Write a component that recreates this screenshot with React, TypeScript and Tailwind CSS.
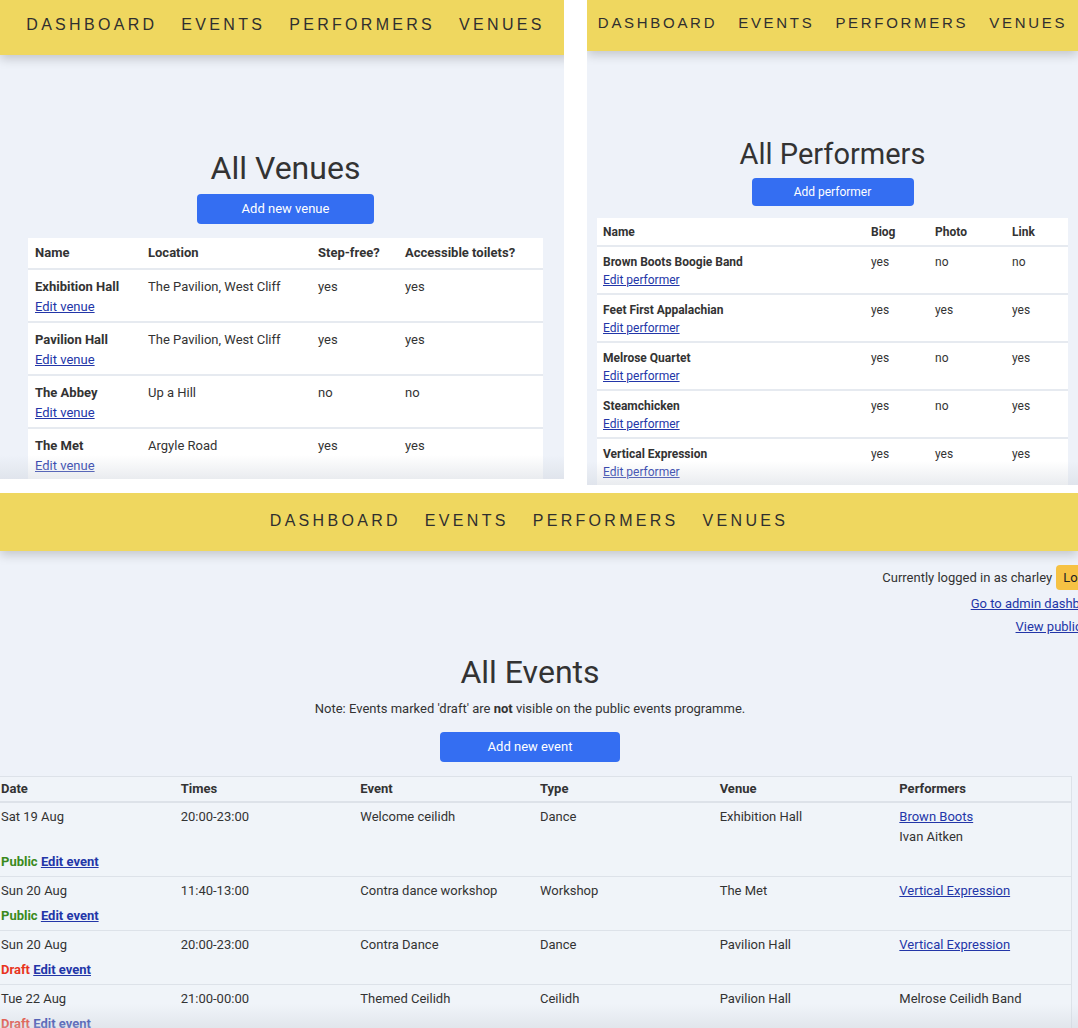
import React from "react";

const venues = [
  { name: "Exhibition Hall", location: "The Pavilion, West Cliff", stepFree: "yes", toilets: "yes" },
  { name: "Pavilion Hall", location: "The Pavilion, West Cliff", stepFree: "yes", toilets: "yes" },
  { name: "The Abbey", location: "Up a Hill", stepFree: "no", toilets: "no" },
  { name: "The Met", location: "Argyle Road", stepFree: "yes", toilets: "yes" },
];

const performers = [
  { name: "Brown Boots Boogie Band", biog: "yes", photo: "no", link: "no" },
  { name: "Feet First Appalachian", biog: "yes", photo: "yes", link: "yes" },
  { name: "Melrose Quartet", biog: "yes", photo: "no", link: "yes" },
  { name: "Steamchicken", biog: "yes", photo: "no", link: "yes" },
  { name: "Vertical Expression", biog: "yes", photo: "yes", link: "yes" },
];

type Perf = { name: string; link?: boolean };

const events: {
  date: string;
  times: string;
  name: string;
  type: string;
  venue: string;
  performers: Perf[];
  status: "Public" | "Draft";
}[] = [
  {
    date: "Sat 19 Aug",
    times: "20:00-23:00",
    name: "Welcome ceilidh",
    type: "Dance",
    venue: "Exhibition Hall",
    performers: [{ name: "Brown Boots", link: true }, { name: "Ivan Aitken" }],
    status: "Public",
  },
  {
    date: "Sun 20 Aug",
    times: "11:40-13:00",
    name: "Contra dance workshop",
    type: "Workshop",
    venue: "The Met",
    performers: [{ name: "Vertical Expression", link: true }],
    status: "Public",
  },
  {
    date: "Sun 20 Aug",
    times: "20:00-23:00",
    name: "Contra Dance",
    type: "Dance",
    venue: "Pavilion Hall",
    performers: [{ name: "Vertical Expression", link: true }],
    status: "Draft",
  },
  {
    date: "Tue 22 Aug",
    times: "21:00-00:00",
    name: "Themed Ceilidh",
    type: "Ceilidh",
    venue: "Pavilion Hall",
    performers: [{ name: "Melrose Ceilidh Band" }],
    status: "Draft",
  },
];

function Nav({ small }: { small?: boolean }) {
  const items = ["DASHBOARD", "EVENTS", "PERFORMERS", "VENUES"];
  return (
    <div
      className={`flex justify-center font-['Liberation_Sans',sans-serif] text-[#2f2f2f] ${
        small ? "gap-[21px] text-[15px] tracking-[2.7px]" : "gap-[24px] text-[16px] tracking-[3.3px]"
      }`}
    >
      {items.map((i) => (
        <span key={i}>{i}</span>
      ))}
    </div>
  );
}

function Fade() {
  return (
    <div className="pointer-events-none absolute bottom-0 left-0 right-0 h-[24px] bg-gradient-to-b from-transparent to-[#cfd4dc]/45" />
  );
}

function VenuesPanel() {
  return (
    <div className="relative h-[479px] w-[564px] overflow-hidden bg-[#eef2f9]">
      <div className="relative z-10 flex h-[55px] w-[571px] items-center bg-[#efd75f] pb-[6px] shadow-[0_4px_10px_rgba(0,0,0,0.18)]">
        <div className="w-full">
          <Nav />
        </div>
      </div>
      <div className="flex w-[571px] flex-col items-center">
        <h1 className="mt-[94px] text-[32px] leading-[38px] text-[#333]">All Venues</h1>
        <button className="mt-[7px] h-[30px] w-[177px] rounded-[4px] bg-[#346ef2] text-[13px] text-white">
          Add new venue
        </button>
      </div>
      <div className="ml-[28px] mt-[14px] w-[515px] bg-white text-[13px] text-[#333]">
        <div className="grid h-[32px] grid-cols-[113px_170px_87px_1fr] items-center border-b-2 border-[#e6eaf0] font-bold">
          <div className="pl-[7px]">Name</div>
          <div className="pl-[7px]">Location</div>
          <div className="pl-[7px]">Step-free?</div>
          <div className="pl-[7px]">Accessible toilets?</div>
        </div>
        {venues.map((v) => (
          <div
            key={v.name}
            className="grid grid-cols-[113px_170px_87px_1fr] border-b-2 border-[#e6eaf0] pb-[4px] pt-[7px] leading-5"
          >
            <div className="pl-[7px]">
              <div className="font-bold">{v.name}</div>
              <a className="text-[#2336a8] underline">Edit venue</a>
            </div>
            <div className="pl-[7px]">{v.location}</div>
            <div className="pl-[7px]">{v.stepFree}</div>
            <div className="pl-[7px]">{v.toilets}</div>
          </div>
        ))}
      </div>
      <Fade />
    </div>
  );
}

function PerformersPanel() {
  return (
    <div className="relative h-[485px] w-[491px] overflow-hidden bg-[#eef2f9]">
      <div className="relative z-10 flex h-[51px] items-center bg-[#efd75f] pb-[5px] shadow-[0_4px_10px_rgba(0,0,0,0.18)]">
        <div className="w-full">
          <Nav small />
        </div>
      </div>
      <div className="flex flex-col items-center">
        <h1 className="mt-[86px] text-[29px] leading-[34px] text-[#333]">All Performers</h1>
        <button className="mt-[7px] h-[28px] w-[162px] rounded-[4px] bg-[#346ef2] text-[12px] text-white">
          Add performer
        </button>
      </div>
      <div className="ml-[10px] mt-[12px] w-[471px] bg-white text-[12px] text-[#333]">
        <div className="grid h-[29px] grid-cols-[268px_64px_77px_1fr] items-center border-b-2 border-[#e6eaf0] font-bold">
          <div className="pl-[6px]">Name</div>
          <div className="pl-[6px]">Biog</div>
          <div className="pl-[6px]">Photo</div>
          <div className="pl-[6px]">Link</div>
        </div>
        {performers.map((p) => (
          <div
            key={p.name}
            className="grid grid-cols-[268px_64px_77px_1fr] border-b-2 border-[#e6eaf0] pb-[4px] pt-[6px] leading-[18px]"
          >
            <div className="pl-[6px]">
              <div className="font-bold">{p.name}</div>
              <a className="text-[#2336a8] underline">Edit performer</a>
            </div>
            <div className="pl-[6px]">{p.biog}</div>
            <div className="pl-[6px]">{p.photo}</div>
            <div className="pl-[6px]">{p.link}</div>
          </div>
        ))}
      </div>
      <Fade />
    </div>
  );
}

function EventsPanel() {
  return (
    <div className="relative mt-[8px] h-[535px] w-[1078px] overflow-hidden bg-[#eef2f9] text-[#333]">
      <div className="relative z-10 flex h-[58px] items-center bg-[#efd75f] pb-[2px] shadow-[0_4px_10px_rgba(0,0,0,0.18)]">
        <div className="ml-[-8px] w-[1074px]">
          <Nav />
        </div>
      </div>
      <div className="mr-[-36px] mt-[14px] flex flex-col items-end text-[13px]">
        <div className="flex h-[25px] items-center gap-[4px]">
          <span>Currently logged in as charley</span>
          <button className="h-[25px] rounded-[4px] bg-[#f6c244] px-[7px] text-[13px] text-[#222]">Log out</button>
        </div>
        <a className="mr-[8px] mt-[4px] leading-5 text-[#2336a8] underline">Go to admin dashboard</a>
        <a className="mr-[8px] mt-[3px] leading-5 text-[#2336a8] underline">View public site</a>
      </div>
      <div className="ml-[-8px] flex w-[1076px] flex-col items-center">
        <h1 className="mt-[16px] text-[32px] leading-[38px]">All Events</h1>
        <p className="mt-[9px] text-[13px] leading-[18px]">
          Note: Events marked 'draft' are <b>not</b> visible on the public events programme.
        </p>
        <button className="mt-[14px] h-[30px] w-[180px] rounded-[4px] bg-[#346ef2] text-[13px] text-white">
          Add new event
        </button>
      </div>
      <div className="ml-[-8px] mt-[14px] w-[1080px] border border-[#dde2e9] bg-[#f0f4f9] text-[13px]">
        <div className="grid h-[26px] grid-cols-6 items-center border-b-2 border-[#dde2e9] font-bold">
          {["Date", "Times", "Event", "Type", "Venue", "Performers"].map((h) => (
            <div key={h} className="pl-[8px]">
              {h}
            </div>
          ))}
        </div>
        {events.map((e, idx) => (
          <div key={idx} className="border-b border-[#dde2e9] pb-[4px] pt-[4px] leading-5">
            <div className="grid grid-cols-6">
              <div className="pl-[8px]">{e.date}</div>
              <div className="pl-[8px]">{e.times}</div>
              <div className="pl-[8px]">{e.name}</div>
              <div className="pl-[8px]">{e.type}</div>
              <div className="pl-[8px]">{e.venue}</div>
              <div className="pl-[8px]">
                {e.performers.map((p) =>
                  p.link ? (
                    <a key={p.name} className="block text-[#2336a8] underline">
                      {p.name}
                    </a>
                  ) : (
                    <div key={p.name}>{p.name}</div>
                  )
                )}
              </div>
            </div>
            <div className="mt-[5px] pl-[8px] font-bold">
              <span className={e.status === "Public" ? "text-[#3a8a1c]" : "text-[#e8341f]"}>{e.status}</span>{" "}
              <a className="text-[#2336a8] underline">Edit event</a>
            </div>
          </div>
        ))}
      </div>
      <Fade />
    </div>
  );
}

export default function App() {
  return (
    <div className="h-[1028px] w-[1078px] overflow-hidden bg-white font-['Roboto',sans-serif]">
      <div className="flex items-start gap-[23px]">
        <VenuesPanel />
        <PerformersPanel />
      </div>
      <EventsPanel />
    </div>
  );
}
